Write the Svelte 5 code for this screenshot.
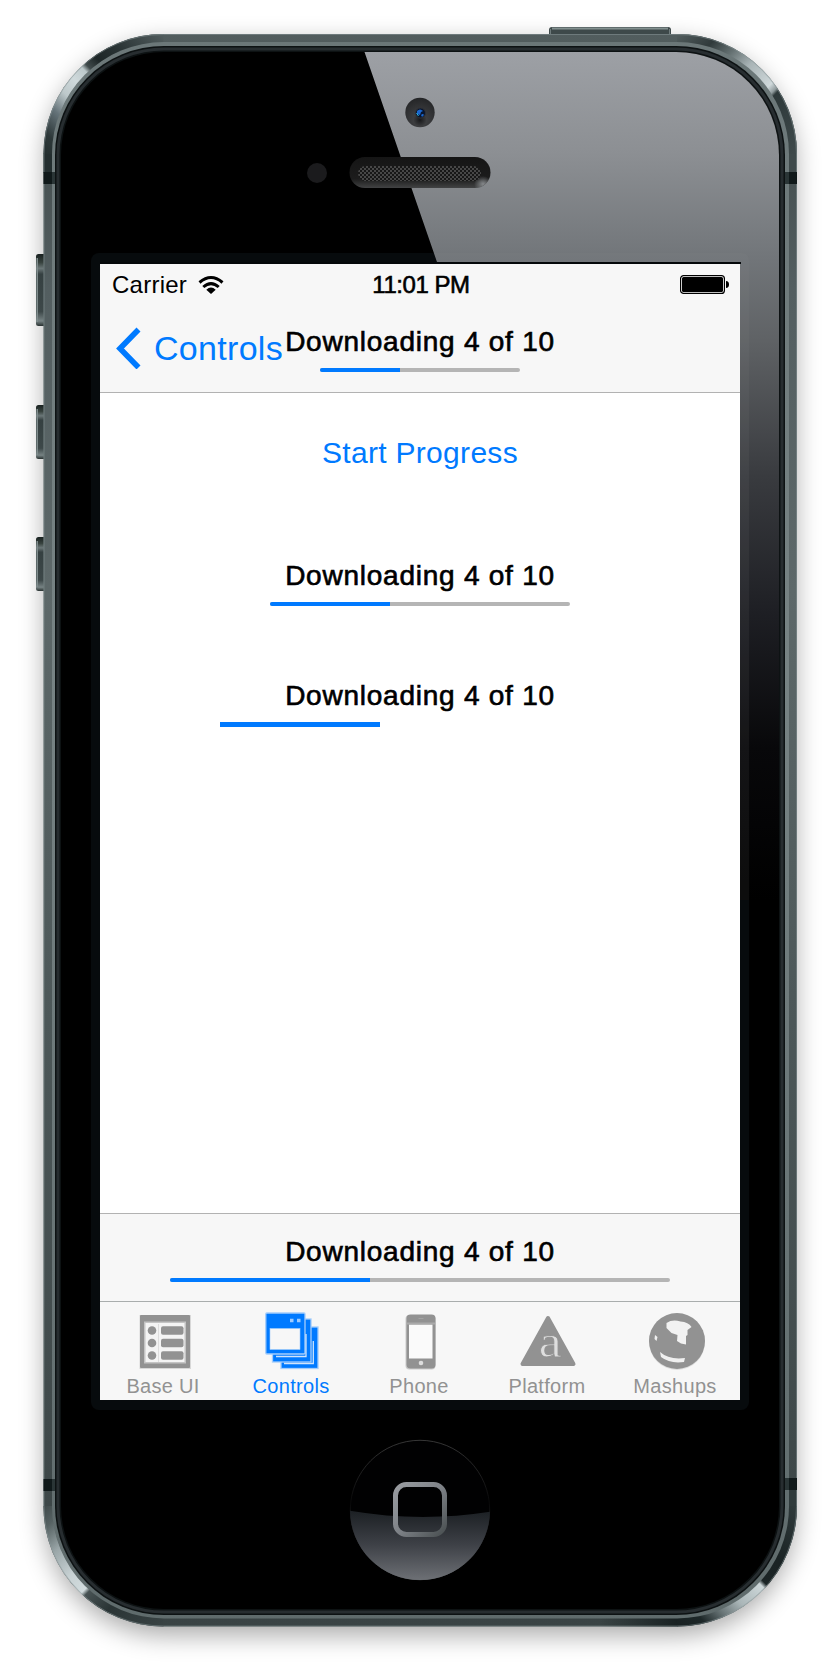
<script>
  const label = 'Downloading 4 of 10';
  const tabs = [
    { id: 'base', name: 'Base UI' },
    { id: 'controls', name: 'Controls', active: true },
    { id: 'phone', name: 'Phone' },
    { id: 'platform', name: 'Platform' },
    { id: 'mashups', name: 'Mashups' }
  ];
</script>

{#snippet progress(width, kind)}
  <div class="progress">
    <span class="medium">{label}</span>
    <div class="track {kind}" style="width: {width}px"><i style="width: 40%"></i></div>
  </div>
{/snippet}

<main class="stage">
  <svg class="device" viewBox="0 0 840 1680" width="840" height="1680" aria-hidden="true">
    <defs>
      <linearGradient id="band" x1="0" y1="0" x2="0" y2="1">
        <stop offset="0" stop-color="#525d5e" /><stop offset=".08" stop-color="#465051" />
        <stop offset=".16" stop-color="#535e60" /><stop offset=".35" stop-color="#5d6869" />
        <stop offset=".62" stop-color="#4c5758" /><stop offset=".85" stop-color="#414b4c" />
        <stop offset="1" stop-color="#394344" />
      </linearGradient>
      <linearGradient id="rim" x1="0" y1="0" x2="0" y2="1">
        <stop offset="0" stop-color="#6b7778" /><stop offset=".4" stop-color="#778384" />
        <stop offset="1" stop-color="#5f6b6c" />
      </linearGradient>
      <linearGradient id="tl" gradientUnits="userSpaceOnUse" x1="43.5" y1="154" x2="163.5" y2="34">
        <stop offset="0" stop-color="#232e2f" /><stop offset=".1" stop-color="#2d3839" />
        <stop offset=".23" stop-color="#66747a" /><stop offset=".34" stop-color="#bdc8ca" />
        <stop offset=".44" stop-color="#cfd9db" /><stop offset=".52" stop-color="#bdc9cb" />
        <stop offset=".55" stop-color="#414b4c" /><stop offset=".62" stop-color="#1d2627" />
        <stop offset=".75" stop-color="#293334" /><stop offset="1" stop-color="#525d5e" />
      </linearGradient>
      <linearGradient id="tr" gradientUnits="userSpaceOnUse" x1="677" y1="34" x2="797" y2="154">
        <stop offset="0" stop-color="#525d5e" /><stop offset=".18" stop-color="#303a3b" />
        <stop offset=".3" stop-color="#647071" /><stop offset=".43" stop-color="#a9b4b6" />
        <stop offset=".6" stop-color="#cfd8da" /><stop offset=".64" stop-color="#8f9a9c" />
        <stop offset=".66" stop-color="#2d3839" /><stop offset="1" stop-color="#3f4a4b" />
      </linearGradient>
      <linearGradient id="bl" gradientUnits="userSpaceOnUse" x1="43.5" y1="1506" x2="163.5" y2="1626">
        <stop offset="0" stop-color="#3f494a" /><stop offset=".1" stop-color="#566263" />
        <stop offset=".24" stop-color="#9ba7a9" /><stop offset=".4" stop-color="#c7d1d3" />
        <stop offset=".52" stop-color="#d2dcde" /><stop offset=".545" stop-color="#475253" />
        <stop offset=".7" stop-color="#2a3435" /><stop offset="1" stop-color="#394344" />
      </linearGradient>
      <linearGradient id="br" gradientUnits="userSpaceOnUse" x1="677" y1="1626" x2="797" y2="1506">
        <stop offset="0" stop-color="#182122" /><stop offset=".13" stop-color="#1d2728" />
        <stop offset=".24" stop-color="#667274" /><stop offset=".36" stop-color="#aab6b8" />
        <stop offset=".52" stop-color="#cdd7d9" /><stop offset=".545" stop-color="#1b2425" />
        <stop offset=".7" stop-color="#1a2324" /><stop offset="1" stop-color="#303b3c" />
      </linearGradient>
      <linearGradient id="foot" x1="0" y1="0" x2="1" y2="0">
        <stop offset="0" stop-color="#182122" stop-opacity="0" /><stop offset="1" stop-color="#182122" />
      </linearGradient>
      <linearGradient id="gloss" gradientUnits="userSpaceOnUse" x1="0" y1="52" x2="0" y2="900">
        <stop offset="0" stop-color="#9da0a5" /><stop offset=".12" stop-color="#8c8f93" />
        <stop offset=".24" stop-color="#72767a" /><stop offset=".34" stop-color="#5f6265" />
        <stop offset=".5" stop-color="#393b3f" /><stop offset=".66" stop-color="#1e1f24" />
        <stop offset=".82" stop-color="#08080a" /><stop offset="1" stop-color="#000" />
      </linearGradient>
      <linearGradient id="btnV" x1="0" y1="0" x2="0" y2="1">
        <stop offset="0" stop-color="#18201f" /><stop offset=".12" stop-color="#38433f" />
        <stop offset=".2" stop-color="#6b7778" /><stop offset=".28" stop-color="#354041" />
        <stop offset=".8" stop-color="#3d4849" /><stop offset=".93" stop-color="#778384" />
        <stop offset="1" stop-color="#27302f" />
      </linearGradient>
      <linearGradient id="ear" x1="0" y1="0" x2="0" y2="1">
        <stop offset="0" stop-color="#151515" /><stop offset=".7" stop-color="#1c1c1c" />
        <stop offset="1" stop-color="#424344" />
      </linearGradient>
      <radialGradient id="cam" cx=".5" cy=".75" r=".75">
        <stop offset="0" stop-color="#17181a" /><stop offset=".3" stop-color="#3c3d3f" /><stop offset="1" stop-color="#242527" />
      </radialGradient>
      <radialGradient id="glint"><stop offset="0" stop-color="#85888b" /><stop offset="1" stop-color="#85888b" stop-opacity="0" /></radialGradient>
      <pattern id="mesh" width="4" height="4" patternUnits="userSpaceOnUse">
        <rect width="4" height="4" fill="#171717" />
        <rect width="2" height="2" fill="#474747" /><rect x="2" y="2" width="2" height="2" fill="#474747" />
      </pattern>
      <linearGradient id="homeLow" gradientUnits="userSpaceOnUse" x1="0" y1="1510" x2="0" y2="1580">
        <stop offset="0" stop-color="#1b1f23" /><stop offset=".5" stop-color="#3e4147" /><stop offset="1" stop-color="#6d7075" />
      </linearGradient>
      <linearGradient id="homeRing" x1="0" y1="0" x2="0" y2="1">
        <stop offset="0" stop-color="#444" /><stop offset=".45" stop-color="#0a0a0b" /><stop offset="1" stop-color="#606368" />
      </linearGradient>
      <linearGradient id="square" x1="0" y1="0" x2="1" y2="1">
        <stop offset="0" stop-color="#999ca1" /><stop offset=".5" stop-color="#7e8287" /><stop offset="1" stop-color="#4a5052" />
      </linearGradient>
      <clipPath id="glass"><rect x="61" y="52" width="718" height="1557" rx="103" /></clipPath>
      <clipPath id="earClip"><rect x="349.5" y="157" width="141" height="31" rx="15.5" /></clipPath>
      <clipPath id="homeClip"><circle cx="420" cy="1510" r="70" /></clipPath>
      <filter id="shadow" x="-10%" y="-10%" width="120%" height="120%"><feGaussianBlur stdDeviation="13" /></filter>
    </defs>

    <rect x="45" y="43" width="750" height="1592" rx="120" fill="#000" opacity=".34" filter="url(#shadow)" />

    <g>
      <path d="M549 35v-5q0-3 3-3h116q3 0 3 3v5z" fill="#3e494a" />
      <path d="M552 28.500h116" stroke="#82908f" stroke-width="2" />
      <path d="M550.500 29v6M669.500 29v6" stroke="#6f7b7c" />
    </g>
    {#each [[254, 72], [405, 54], [537, 54]] as [y, h]}
      <rect x="36" {y} width="11" height={h} rx="2.500" fill="url(#btnV)" />
      <rect x="36.500" y={y + 4} width="1.500" height={h - 8} fill="#7f8b8c" />
    {/each}

    <rect x="43.500" y="34" width="753.500" height="1592.500" rx="120" fill="url(#band)" />
    <path d="M43.500 153.500h9V173h-9z" fill="#232e2f" />
    <path d="M788 153.500h9V173h-9z" fill="#3f4a4b" />
    <path d="M788 1490h9v16.500h-9z" fill="#303b3c" />
    <path d="M600 1617h77.500v9.500H600z" fill="url(#foot)" />
    <g fill="none" stroke-width="9">
      <path d="M48 154A115.500 115.500 0 0 1 163.500 38.500" stroke="url(#tl)" />
      <path d="M677 38.500A115.500 115.500 0 0 1 792.500 154" stroke="url(#tr)" />
      <path d="M48 1506A115.500 115.500 0 0 0 163.500 1622" stroke="url(#bl)" />
      <path d="M677 1622A115.500 115.500 0 0 0 792.500 1506" stroke="url(#br)" />
    </g>
    <rect x="44" y="34.500" width="752.500" height="1591.500" rx="119.500" fill="none" stroke="#89989a" stroke-opacity=".5" />
    <rect x="52" y="42" width="737" height="1576.500" rx="112" fill="url(#rim)" />
    <g fill="#10191a">
      <path d="M43.500 172h8.500v12h-8.500zM789 172h8v12h-8zM43.500 1479h8.500v12h-8.500zM789 1478h8v12h-8z" />
      <path fill="#2a3536" d="M52 172h4v12h-4zM785 172h4v12h-4zM52 1479h4v12h-4zM785 1478h4v12h-4z" />
    </g>
    <rect x="55" y="46" width="730" height="1569" rx="109" fill="#0d1213" />
    <rect x="58" y="49" width="724" height="1563" rx="106" fill="none" stroke="#272d30" stroke-width="3" />
    <rect x="61" y="52" width="718" height="1557" rx="103" fill="#000" />
    <rect x="91" y="253" width="658" height="1157" rx="8" fill="#070b0d" />
    <g clip-path="url(#glass)">
      <path d="M364.500 52H779V900H740V262H437z" fill="url(#gloss)" />
      <path d="M434 253h307q8 0 8 8v639h-9V262H437z" fill="#8b9393" opacity=".09" />
    </g>
    <path d="M100 263h641" stroke="#05080a" stroke-width="2" />

    <circle cx="317" cy="173" r="10" fill="#1b1b1d" />
    <circle cx="420" cy="112.500" r="14.700" fill="url(#cam)" />
    <circle cx="420.500" cy="113" r="5" fill="#09152d" stroke="#303136" />
    <path d="M417 111q3-3 6 0l-2 1-1 3-3-1zM421 115q2-2 3 0l-2 2z" fill="#1b67ce" />
    <path d="M416.500 113l2 3" stroke="#2bb4dd" />

    <g clip-path="url(#earClip)">
      <rect x="349" y="157" width="142" height="31" fill="url(#ear)" />
      <ellipse cx="483" cy="184" rx="9" ry="8" fill="url(#glint)" />
      <rect x="358" y="166" width="123" height="15" rx="7.500" fill="url(#mesh)" />
    </g>

    <circle cx="420" cy="1510" r="69.700" fill="#010102" stroke="url(#homeRing)" stroke-width=".8" />
    <path clip-path="url(#homeClip)" d="M348 1510.500Q420 1523 492 1511.500V1582H348z" fill="url(#homeLow)" />
    <rect x="395.500" y="1484.500" width="49" height="50" rx="11" fill="none" stroke="url(#square)" stroke-width="5" />
  </svg>

  <section class="screen">
    <div class="status">
      <span class="carrier">Carrier
        <svg width="26" height="20" viewBox="0 0 26 20">
          <g fill="none" stroke="#000" stroke-width="3">
            <path d="M1.500 7.500Q13 -2.500 24.500 7.500M5.300 12Q13 5.200 20.700 12" />
          </g>
          <path d="M8.300 14.700Q13 10.500 17.700 14.700L13 19z" />
        </svg>
      </span>
      <span class="time">11:01 PM</span>
      <svg class="battery" width="50" height="20" viewBox="0 0 50 20">
        <rect x=".6" y=".6" width="43.800" height="17.800" rx="3" fill="#fff" stroke="#000" stroke-width="1.200" />
        <rect x="2" y="2" width="41" height="15" rx="1.500" />
        <path d="M46 6q3 .3 3 3.500T46 13z" />
      </svg>
    </div>

    <nav>
      <div class="back">
        <svg width="25" height="42" viewBox="0 0 25 42"><path d="M22.500 2.500L4 21.500L22.500 40.500" fill="none" stroke="#007aff" stroke-width="5.600" /></svg>
        <span>Controls</span>
      </div>
      {@render progress(200, '')}
    </nav>

    <div class="content">
      <div class="start">Start Progress</div>
      {@render progress(300, '')}
      <div class="second">{@render progress(400, 'bare')}</div>
    </div>

    <div class="toolbar">{@render progress(500, '')}</div>

    <footer>
      {#each tabs as tab}
        <div class="tab" class:active={tab.active}>
          <svg width="58" height="60" viewBox="0 0 58 60">
            {#if tab.id === 'base'}
              <rect x="4.500" y="3" width="51.500" height="54" fill="currentColor" opacity=".3" />
              <rect x="5" y="3" width="50" height="53" rx="1" fill="currentColor" />
              <rect x="9" y="9.500" width="42" height="42" fill="#c4c4c4" />
              <rect x="10.500" y="11" width="39" height="39" fill="#f4f4f4" />
              <path d="M23.500 12v38" stroke="#dedede" />
              {#each [18.500, 31, 43.500] as y}
                <circle cx="17" cy={y} r="4.300" fill="currentColor" />
                <rect x="26" y={y - 4.300} width="22.500" height="8.600" rx="2" fill="currentColor" />
              {/each}
            {:else if tab.id === 'controls'}
              <g fill="currentColor" stroke="#a4cdfb" stroke-width="1.300">
                <rect x="18" y="15" width="37" height="41.500" />
                <rect x="9.500" y="7" width="38.500" height="43" />
                <rect x="2.800" y="1" width="39.200" height="41" rx="1" />
              </g>
              <path d="M50.300 29v22.500H21" fill="none" stroke="#cfe4fc" stroke-width="1.300" />
              <path d="M43 22v22.500H13" fill="none" stroke="#cfe4fc" stroke-width="1.300" />
              <rect x="7" y="16.500" width="30" height="21" fill="#f7f7f7" stroke="#a4cdfb" stroke-width=".6" />
              <path d="M27 8.500h3.500M34 8.500h3.500" stroke="#9dcbff" stroke-width="3.500" />
            {:else if tab.id === 'phone'}
              <rect x="14.500" y="3" width="30" height="54.500" rx="4" fill="currentColor" opacity=".45" />
              <rect x="15.500" y="2.500" width="29" height="54" rx="4" fill="currentColor" />
              <rect x="18" y="12.500" width="23.500" height="34" fill="#fafafa" />
              <path d="M16 11.500h28" stroke="#aaa" stroke-width="2" />
              <path d="M27.500 6.500h5" stroke="#a3a3a3" /><circle cx="30" cy="51" r="2.300" fill="#ddd" />
            {:else if tab.id === 'platform'}
              <path d="M29 6L54.500 52H3.500z" fill="currentColor" stroke="currentColor" stroke-width="4" stroke-linejoin="round" />
              <text x="16.200" y="45" transform="translate(2 0) scale(1.100 1)" font-family="Liberation Serif" font-size="47" fill="#dedede" stroke="#929292" stroke-width=".8">a</text>
            {:else}
              <circle cx="30" cy="30" r="28" fill="#ddd" />
              <circle cx="30" cy="29" r="28" fill="currentColor" />
              <path d="M19.500 11q6-4 14-1.500q8 .5 11 5.500l-4 3v5l-1.500 1v8.500l-5-1-4-2.500 .5-6-6-2-5-5z" fill="#f2f2f2" />
              <path d="M13 40q9 8 25 6l-1 4q-14 2-23-5zM8 23l2.500 2-1 4-2-2z" fill="#f0f0f0" />
            {/if}
          </svg>
          <span>{tab.name}</span>
        </div>
      {/each}
    </footer>
  </section>
</main>

<style>
  :global(body) { margin: 0; background: #fff; }
  .stage {
    position: relative; box-sizing: border-box; width: 840px; height: 1680px;
    padding: 264px 100px 280px; overflow: hidden;
    font-family: "Liberation Sans", Arial, sans-serif; color: #000;
  }
  .device { position: absolute; inset: 0; }
  .screen {
    position: relative; display: flex; flex-direction: column;
    width: 640px; height: 1136px; background: #fff;
  }
  .status {
    display: grid; grid-template-columns: 1fr auto 1fr; box-sizing: border-box;
    height: 40px; padding: 0 10px 0 12px; background: #f7f7f7;
    font-size: 24px; line-height: 41px; letter-spacing: .25px;
  }
  .carrier { display: flex; gap: 11px; }
  .carrier svg { margin-top: 11px; }
  .time { letter-spacing: -.45px; -webkit-text-stroke: .6px #000; }
  .battery { justify-self: end; margin-top: 11px; }
  nav {
    display: grid; grid-template-columns: 1fr auto 1fr; box-sizing: border-box;
    height: 89px; background: #f7f7f7; border-bottom: 1px solid #b2b2b2;
  }
  .back {
    display: flex; gap: 13px; width: 0; padding: 23px 0 0 16px; white-space: nowrap;
    color: #007aff; font-size: 34px; line-height: 42px; letter-spacing: .3px;
  }
  .back svg { flex: none; }
  .progress { display: flex; flex-direction: column; align-items: center; gap: 9px; }
  nav .progress, .toolbar .progress { padding-top: 21px; }
  .medium { font-size: 28px; line-height: 34px; letter-spacing: .76px; -webkit-text-stroke: .65px #000; white-space: nowrap; }
  .track { height: 4px; border-radius: 2px; overflow: hidden; background: #b5b5b5; }
  .track i { display: block; height: 100%; background: #007aff; }
  .track.bare { height: 5px; border-radius: 0; background: none; }
  .content { flex: 1; padding-top: 42px; }
  .start {
    height: 36px; margin-bottom: 88px; text-align: center; color: #007aff;
    font-size: 30px; line-height: 36px; letter-spacing: .3px;
  }
  .second { margin-top: 73px; }
  .toolbar { box-sizing: border-box; height: 88px; background: #f7f7f7; border-top: 1px solid #b2b2b2; }
  footer {
    display: flex; box-sizing: border-box; height: 99px; padding-top: 10px;
    background: #f7f7f7; border-top: 1px solid #a9adad;
  }
  .tab { flex: 1; display: flex; flex-direction: column; align-items: center; color: #929292; font-size: 20px; line-height: 24px; letter-spacing: .3px; }
  .tab span { margin: 2px 2px 0 0; }
  .tab.active { color: #007aff; }
</style>
